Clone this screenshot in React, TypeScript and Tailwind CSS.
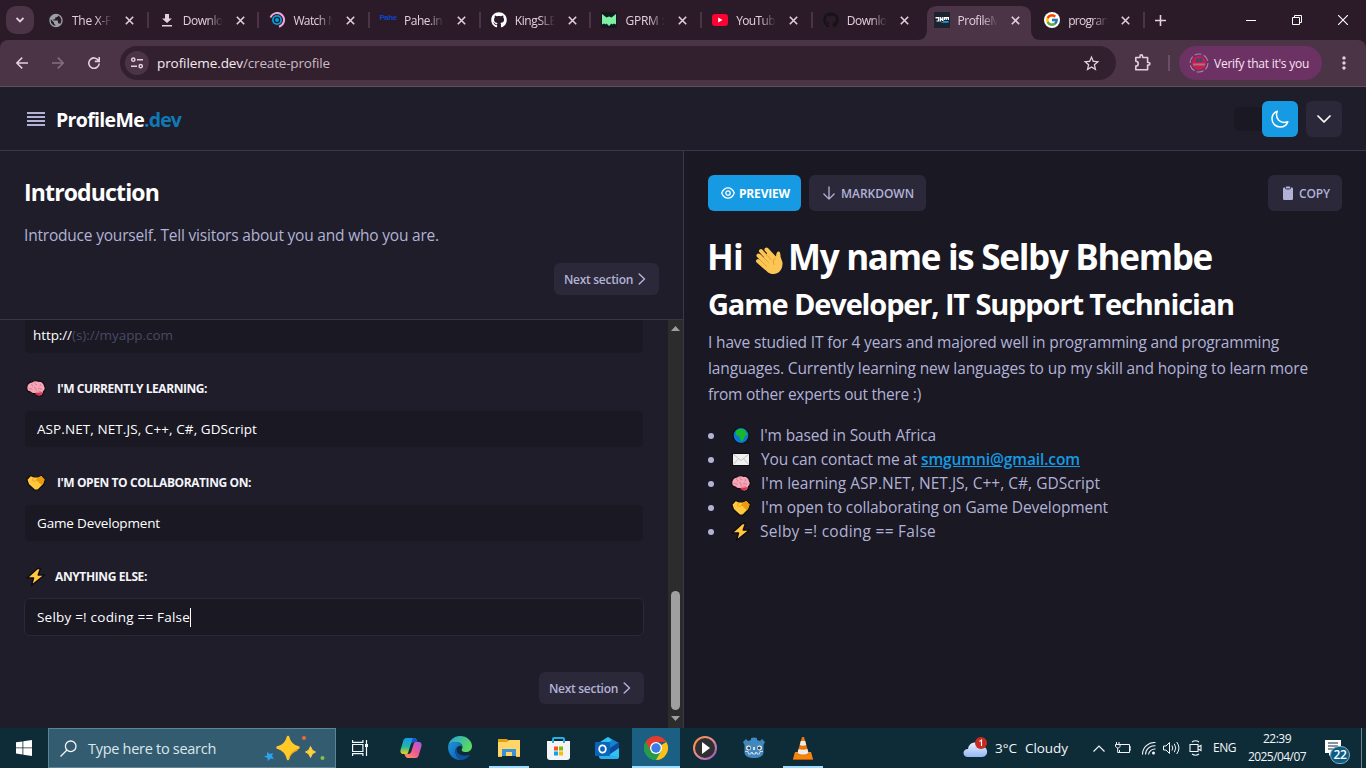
import React, { useLayoutEffect, useRef, useState } from "react";
import { FaGithub } from "react-icons/fa";
import { FcGoogle } from "react-icons/fc";
import { MdPublic, MdStarBorder, MdMoreVert } from "react-icons/md";

/* Spreads or tightens a line of text so that it takes exactly w pixels. */
function Fit({ w, className = "", children }: { w: number; className?: string; children: string }) {
  const ref = useRef<HTMLSpanElement>(null);
  const [spacing, setSpacing] = useState(0);
  useLayoutEffect(() => {
    if (ref.current) {
      const natural = ref.current.getBoundingClientRect().width;
      setSpacing((w - natural) / children.length);
    }
  }, []);
  return (
    <span ref={ref} className={`inline-block whitespace-pre ${className}`} style={{ letterSpacing: `${spacing}px` }}>
      {children}
    </span>
  );
}

function CloseX({ size = 9, className = "" }: { size?: number; className?: string }) {
  return (
    <svg width={size} height={size} viewBox="0 0 9 9" className={className} stroke="currentColor" strokeWidth="1.6" fill="none">
      <path d="M.8.8 8.2 8.2M8.2.8.8 8.2" />
    </svg>
  );
}

function ChevronRight({ className = "" }: { className?: string }) {
  return (
    <svg width="8" height="12" viewBox="0 0 8 12" fill="none" stroke="currentColor" strokeWidth="1.500" strokeLinecap="round" strokeLinejoin="round" className={className}>
      <path d="M1.200 1 6.500 6 1.200 11" />
    </svg>
  );
}

const favicons: Record<string, React.ReactNode> = {
  globe: <MdPublic size={17} className="text-[#9aa0a6]" />,
  download: (
    <svg width="16" height="16" viewBox="0 0 16 16" fill="#e3cfdd">
      <path d="M6 2h4v4.500h3L8 11 3 6.500h3zM3 13h10v1.600H3z" />
    </svg>
  ),
  watch: (
    <svg width="16" height="16" viewBox="0 0 16 16" fill="none">
      <path d="M1.500 5.500A7 7 0 1 1 10 14.700" stroke="#f3a6d8" strokeWidth="2" />
      <circle cx="8" cy="8" r="5" fill="#0b9bd8" />
      <circle cx="8" cy="8" r="2.600" stroke="#10222e" strokeWidth="1.200" />
    </svg>
  ),
  pahe: <span className="mb-1 font-['Liberation_Sans'] text-[8px] leading-3 font-bold tracking-[-0.500px] text-[#0c46c4]">Pahe</span>,
  github: <FaGithub size={16} className="text-white" />,
  gprm: (
    <svg width="16" height="16" viewBox="0 0 16 16">
      <rect width="16" height="16" fill="#141a1c" />
      <path d="M1 2l4.500 3.500L8 4.500l2.500 1L15 2v10.500l-2-1-1.500 1-1-1L8 14l-2.500-2.500-1 1-1.500-1-2 1z" fill="#7ef0a6" />
    </svg>
  ),
  youtube: (
    <svg width="16" height="16" viewBox="0 0 16 16">
      <rect y="2" width="16" height="12" rx="3" fill="#ff0033" />
      <path d="M6.200 5.500v5L10.500 8z" fill="#fff" />
    </svg>
  ),
  githubDark: <FaGithub size={16} className="text-[#171417]" />,
  profile: (
    <svg width="16" height="16" viewBox="0 0 16 16">
      <rect width="16" height="16" fill="#1b2430" />
      <path d="M1.500 5h4v4.500h-3V8.500H4V6.500H1.500zM6 5h1.200v1.500h1V5h1.300v4H8V8H7.200v1.500H6zM10 5h5v3h-1V6.500h-.8V8h-1V6.500h-.8V8H10z" fill="#fff" />
      <path d="M9 9h5.500v1.800H7.500V10H9z" fill="#159de4" />
    </svg>
  ),
  google: (
    <span className="flex size-4 items-center justify-center rounded-full bg-white">
      <FcGoogle size={14} />
    </span>
  ),
};

const tabs = [
  { icon: "globe", title: "The X-F", w: 39 },
  { icon: "download", title: "Downlo", w: 40 },
  { icon: "watch", title: "Watch N", w: 43 },
  { icon: "pahe", title: "Pahe.in", w: 38 },
  { icon: "github", title: "KingSLE", w: 41 },
  { icon: "gprm", title: "GPRM :", w: 39 },
  { icon: "youtube", title: "YouTub", w: 39 },
  { icon: "githubDark", title: "Downlo", w: 40 },
  { icon: "profile", title: "ProfileM", w: 43, active: true },
  { icon: "google", title: "progran", w: 40 },
];

function TabStrip() {
  return (
    <div className="flex h-10 bg-[#2b1a28] text-[#e3cfdd]">
      <div className="mt-1.5 ml-1.5 flex size-7 shrink-0 items-center justify-center rounded-[10px] bg-[#4b3445]">
        <svg width="8" height="6" viewBox="0 0 8 6" fill="none" stroke="currentColor" strokeWidth="1.8">
          <path d="M.5 1 4 4.500 7.500 1" />
        </svg>
      </div>
      <div className="ml-1 flex">
        {tabs.map((t, i) => (
          <div key={i} className="relative flex h-10 w-[110.7px] shrink-0 items-center pl-[10px]">
            {t.active && (
              <svg className="absolute top-1.5 -left-[7px]" width="124" height="34" viewBox="0 0 124 34" fill="#4b3445">
                <path d="M0 34q10 0 10-10V10q0-10 10-10h84q10 0 10 10v14q0 10 10 10z" />
              </svg>
            )}
            <div className="relative flex w-4 items-center justify-center">{favicons[t.icon]}</div>
            <div className="relative mt-px ml-2 w-10 text-[12px] leading-5 whitespace-nowrap [mask-image:linear-gradient(to_right,black_60%,transparent)]">
              <Fit w={t.w}>{t.title}</Fit>
            </div>
            <CloseX className="relative ml-[13px]" />
            {i !== 7 && i !== 8 && <div className="absolute top-3 right-0 h-4 w-[2px] bg-[#4b3445]" />}
          </div>
        ))}
      </div>
      <svg className="mt-[15px] ml-[10px]" width="11" height="11" viewBox="0 0 11 11" stroke="currentColor" strokeWidth="1.600">
        <path d="M5.500 0v11M0 5.500h11" />
      </svg>
      <div className="mr-[18px] ml-auto flex h-10 items-center gap-9 text-white">
        <div className="h-px w-[10px] bg-white" />
        <svg width="10" height="10" viewBox="0 0 10 10" fill="none" stroke="currentColor">
          <path d="M.5 2.500h7v7h-7zM2.500 2.500v-2h7v7h-2" />
        </svg>
        <svg width="10" height="10" viewBox="0 0 10 10" fill="none" stroke="currentColor" strokeWidth="1.100">
          <path d="M0 0l10 10M10 0 0 10" />
        </svg>
      </div>
    </div>
  );
}

function Toolbar() {
  return (
    <div className="h-[47px] bg-[#2b1a28]">
      <div className="flex h-[47px] items-start rounded-t-[8px] border-b border-[#5b5158] bg-[#4b3445] pt-1.5 text-[#e3cfdd]">
        <div className="flex h-[34px] items-center">
          <svg className="ml-4" width="12" height="12" viewBox="0 0 12 12" fill="none" stroke="currentColor" strokeWidth="1.500">
            <path d="M12 6H1M6.200.6.800 6l5.400 5.400" />
          </svg>
          <svg className="ml-6 text-[#84707f]" width="12" height="12" viewBox="0 0 12 12" fill="none" stroke="currentColor" strokeWidth="1.500">
            <path d="M0 6h11M5.800.6 11.200 6l-5.400 5.400" />
          </svg>
          <svg className="ml-[24px]" width="12" height="12" viewBox="0 0 12 12" fill="none" stroke="currentColor" strokeWidth="1.600">
            <path d="M10.500 3.500A5.200 5.200 0 1 0 11.200 6.500M11.200 0v4.400H6.800" />
          </svg>
        </div>
        <div className="ml-5 flex h-[34px] w-[996px] items-center rounded-full bg-[#33202f] pl-[5px]">
          <div className="flex size-6 items-center justify-center rounded-full bg-[#4b3445]">
            <svg width="12" height="12" viewBox="0 0 12 12" fill="none" stroke="currentColor" strokeWidth="1.500">
              <circle cx="2.300" cy="2.700" r="1.600" />
              <path d="M6 2.700h6M0 9.200h6" />
              <circle cx="9.700" cy="9.200" r="1.600" />
            </svg>
          </div>
          <div className="ml-2 text-[13.500px] leading-5">
            <Fit w={86} className="text-[#f6eaf2]">profileme.dev</Fit>
            <Fit w={87} className="text-[#c9bbc4]">/create-profile</Fit>
          </div>
          <MdStarBorder size={19} className="mr-[15px] ml-auto text-[#e3cfdd]" />
        </div>
        <div className="flex h-[34px] items-center">
          <svg className="ml-[18px]" width="18" height="18" viewBox="0 0 18 18" fill="none" stroke="currentColor" strokeWidth="1.600" strokeLinejoin="round">
            <path d="M1.800 3.500H6V2.200a1.300 1.300 0 0 1 2.600 0v1.300h5v5h1a1.300 1.300 0 0 1 0 2.600h-1v4.700H1.800v-3.700a2.400 2.400 0 0 0 0-4.800z" />
          </svg>
          <div className="ml-4 h-4 w-[2px] bg-[#685062]" />
          <div className="ml-[9px] flex h-[34px] w-[143px] items-center rounded-full bg-[#6b3263] pl-[10px] text-[12px] text-[#fbe3f5]">
            <svg width="20" height="20" viewBox="0 0 20 20" fill="none">
              <circle cx="10" cy="10" r="9" stroke="#b184ab" strokeWidth="1.100" strokeDasharray="7 2.400" />
              <circle cx="10" cy="10" r="7" fill="#c51f50" />
              <path d="M7 5.500h3V9H7zM10.500 5h3v4h-3z" fill="#3b4a75" />
              <path d="M4 10.500h12v2H4z" fill="#a9727f" />
            </svg>
            <Fit w={95} className="mt-px ml-[5px]">Verify that it's you</Fit>
          </div>
          <MdMoreVert size={20} className="ml-[12px]" />
        </div>
      </div>
    </div>
  );
}

function Emoji({ kind, size = 20 }: { kind: string; size?: number }) {
  return (
    <svg width={size} height={size} viewBox="0 0 20 20" className="shrink-0">
      {kind === "brain" && (
        <g>
          <path
            d="M.8 9.500C.3 6 2.800 2.800 6.200 2.800c1.500-1.500 4.800-1.500 6.300-.5 3-.5 5.500 1.500 5.800 4 1.500 2 1.200 5-.8 6.200-.3 3-2 4.500-4.200 4.500-2.500 0-3.300-1-4.300-2.500-2 .5-3.500 0-4.500-1.500C2 13 .8 11.500.8 9.500z"
            fill="#f5a6b7" stroke="#100c12" strokeWidth="1.200"
          />
          <path d="M9.500 14.300l7-1.300c-.5 2.500-2 3.500-3.800 3.400-1.500 0-2.500-.8-3.200-2.100z" fill="#dd3150" />
          <path d="M5 5.500c1.500 0 2 1 1.500 2M9 3.500C8.500 5 10 6 11 5.500M14 5c1 1 .500 2-.500 2.500M3 10c2-1 3 0 3.500 1M8 8.500c1.500 0 3 1.500 2 3.500M12 10c1.500-1 3 0 4 .5M10 13.500l5-1" stroke="#da718a" strokeWidth=".9" fill="none" />
        </g>
      )}
      {kind === "hands" && (
        <g>
          <path d="M.8 6.500L4.500 2.500l3 1.300h4.500l3.500-1.300 3.700 4L17.500 11.500 12 17H8.500L2.500 11.500z" fill="#ffc83d" stroke="#100c12" strokeWidth="1.200" strokeLinejoin="round" />
          <path d="M12.500 4.300l3-1.200L18.700 6.500 17 11l-1.500 1L10 6.500z" fill="#eb9b08" />
          <path d="M7.500 4.500L6.500 7.500l2 1 2.500-1.500 4.500 4" stroke="#e39d17" strokeWidth=".8" fill="none" />
        </g>
      )}
      {kind === "bolt" && (
        <path d="M11.500 1.500L1 11h6.500l-2 7.500L18.500 8h-6.300L14.500 1.500z" fill="#ffc83d" stroke="#100c12" strokeWidth="1.500" strokeLinejoin="round" />
      )}
      {kind === "globe" && (
        <g>
          <circle cx="10" cy="9.500" r="8" fill="#0b77d2" stroke="#100c12" strokeWidth="1.200" />
          <path d="M5 4.500l4-1.700 4.500.7 1.500 3 1.700 2-2.700 1.500-1 3-2 2.500-1.500-1-1-4-3.500-1.500-.5-3z" fill="#18b72c" />
        </g>
      )}
      {kind === "mail" && (
        <g>
          <rect x="1.500" y="3.500" width="17" height="12" fill="#f1f1f1" stroke="#100c12" />
          <path d="M2 4l8 6.500L18 4M2 15l5.500-6.500M18 15l-5.500-6.500" stroke="#bdbdbd" strokeWidth=".9" fill="none" />
        </g>
      )}
    </svg>
  );
}

function WavingHand() {
  return (
    <svg width="29" height="30" viewBox="0 0 29 30" fill="none" strokeLinecap="round">
      <path d="M3.500 9.500l9 9M6 5l9 10M3 15l8 7M11.500 3.500l9 9.500" stroke="#fcc654" strokeWidth="4" />
      <path d="M5 17L13 6l7 6c2-2 .5-5 3-6.500 2-.5 2.500 2 2.500 5l2 6c.5 8-4.500 12-9.700 11.500-4 0-7-3-12.800-11z" fill="#fcc654" />
      <path d="M5.500 8.500l8 8M8.500 5.500l8 8.500M4.500 13.500l7 6.500" stroke="#d99a2c" strokeWidth=".8" />
      <path d="M20.500 12c-2 2-3 4-1.500 6.500" stroke="#dd9d2d" strokeWidth="1" />
    </svg>
  );
}

function NextButton() {
  return (
    <div className="flex h-8 w-[105px] items-center rounded-[6px] bg-[#2b283a] pl-[10px] text-[12px] font-semibold text-[#b2b2d6]">
      <Fit w={69} className="mt-[2px]">Next section</Fit>
      <ChevronRight className="ml-[5px]" />
    </div>
  );
}

function Field({ icon, label, labelW, value, valueW, gap, focused }: { icon: string; label: string; labelW: number; value: string; valueW: number; gap: string; focused?: boolean }) {
  return (
    <div>
      <div className="flex h-14 items-center pt-[14px] pl-[2px] text-[12px] font-bold text-[#f4f4fa]">
        <Emoji kind={icon} />
        <Fit w={labelW} className={gap}>{label}</Fit>
      </div>
      <div className={`flex h-[38px] items-center rounded-[6px] border bg-[#191823] pl-3 text-[13.500px] text-white ${focused ? "border-[#2b283a]" : "border-[#1e1d29]"}`}>
        <Fit w={valueW}>{value}</Fit>
        {focused && <div className="h-[19px] w-px bg-white" />}
      </div>
    </div>
  );
}

function LeftPanel() {
  return (
    <div className="flex w-[684px] flex-col border-r border-[#3a364c] bg-[#1e1d29]">
      <div className="flex h-[169px] shrink-0 flex-col border-b border-[#3a364c] px-6 pt-[23px]">
        <div className="h-9 text-[23px] leading-9 font-bold text-white">
          <Fit w={135}>Introduction</Fit>
        </div>
        <div className="mt-[13px] h-6 text-[15.500px] leading-6 text-[#b2b2d6]">
          <Fit w={415}>Introduce yourself. Tell visitors about you and who you are.</Fit>
        </div>
        <div className="mt-4 self-end">
          <NextButton />
        </div>
      </div>
      <div className="flex min-h-0 flex-1">
        <div className="flex w-[668px] flex-col pr-6 pl-6">
          <div className="flex h-[34px] w-[620px] items-center rounded-b-[6px] border-x border-b border-[#1e1d29] bg-[#191823] pb-[3px] pl-2 text-[13.500px] text-white">
            <Fit w={39}>http://</Fit>
            <Fit w={101} className="text-[#4a4962]">(s)://myapp.com</Fit>
          </div>
          <div className="w-[620px]">
            <Field icon="brain" label="I'M CURRENTLY LEARNING:" labelW={150} value="ASP.NET, NET.JS, C++, C#, GDScript" valueW={220} gap="ml-[11px]" />
            <Field icon="hands" label="I'M OPEN TO COLLABORATING ON:" labelW={194} value="Game Development" valueW={123} gap="ml-[11px]" />
            <Field icon="bolt" label="ANYTHING ELSE:" labelW={92} value="Selby =! coding == False" valueW={153} gap="ml-[9px]" focused />
            <div className="mt-9 flex justify-end">
              <NextButton />
            </div>
          </div>
        </div>
        <div className="flex w-[15px] flex-col items-center bg-[#2c2c2c] pt-[6px] pb-[7px]">
          <svg width="9" height="5" viewBox="0 0 9 5" fill="#9f9f9f"><path d="M4.500 0 9 5H0z" /></svg>
          <div className="mt-auto h-[119px] w-[9px] rounded-full bg-[#9f9f9f]" />
          <svg className="mt-[6px]" width="9" height="5" viewBox="0 0 9 5" fill="#9f9f9f"><path d="M4.500 5 9 0H0z" /></svg>
        </div>
      </div>
    </div>
  );
}

const bullets = [
  { icon: "globe", text: "I'm based in South Africa", w: 176, gap: "ml-[9px]" },
  { icon: "mail", text: "You can contact me at ", w: 160, gap: "ml-[10px]", link: "smgumni@gmail.com" },
  { icon: "brain", text: "I'm learning ASP.NET, NET.JS, C++, C#, GDScript", w: 339, gap: "ml-[10px]" },
  { icon: "hands", text: "I'm open to collaborating on Game Development", w: 347, gap: "ml-[10px]" },
  { icon: "bolt", text: "Selby =! coding == False", w: 176, gap: "ml-[9px]" },
];

function RightPanel() {
  return (
    <div className="flex flex-1 flex-col bg-[#191823] px-6 pt-6 text-[#b2b2d6]">
      <div className="flex h-9 gap-2 text-[12px] font-semibold">
        <div className="flex w-[93px] items-center rounded-[6px] bg-[#159ae3] pl-[13px] text-white">
          <svg width="14" height="12" viewBox="0 0 14 12" fill="none" stroke="currentColor" strokeWidth="1.300">
            <path d="M.7 6C3.500-.8 10.500-.8 13.300 6 10.500 12.800 3.500 12.800.7 6z" />
            <circle cx="7" cy="6" r="2.200" />
          </svg>
          <Fit w={51} className="mt-[2px] ml-1 font-bold">PREVIEW</Fit>
        </div>
        <div className="flex w-[117px] items-center rounded-[6px] bg-[#2b283a] pl-[14px]">
          <svg width="12" height="14" viewBox="0 0 12 14" fill="none" stroke="currentColor" strokeWidth="1.300" strokeLinecap="round" strokeLinejoin="round">
            <path d="M6 1v12M.9 8 6 13.100 11.100 8" />
          </svg>
          <Fit w={73} className="mt-[2px] ml-[6px]">MARKDOWN</Fit>
        </div>
        <div className="ml-auto flex w-[74px] items-center rounded-[6px] bg-[#2b283a] pl-[15px]">
          <svg width="10" height="14" viewBox="0 0 10 14">
            <path d="M1.200 1.500H2q0 2 2 2h2q2 0 2-2h.8Q10 1.500 10 2.700v10Q10 14 8.700 14H1.300Q0 14 0 12.700v-10Q0 1.500 1.200 1.500zM3.500.5h3q.700 0 .7 1t-.7 1h-3q-.7 0-.7-1t.7-1z" fill="currentColor" />
          </svg>
          <Fit w={31} className="mt-[2px] ml-[6px]">COPY</Fit>
        </div>
      </div>
      <div className="mt-[22px] flex h-12 items-center text-[35px] font-bold text-white">
        <Fit w={36} className="-ml-px">Hi</Fit>
        <div className="mt-[8px] ml-[12px] w-[33px]"><WavingHand /></div>
        <Fit w={424}>My name is Selby Bhembe</Fit>
      </div>
      <div className="flex h-[46px] items-center text-[29px] font-bold text-white">
        <Fit w={526}>Game Developer, IT Support Technician</Fit>
      </div>
      <div className="mt-[2px] flex flex-col items-start text-[15.500px] leading-[26px]">
        <Fit w={571}>I have studied IT for 4 years and majored well in programming and programming</Fit>
        <Fit w={600}>languages. Currently learning new languages to up my skill and hoping to learn more</Fit>
        <Fit w={213}>from other experts out there :)</Fit>
      </div>
      <div className="mt-[17px] text-[15.500px]">
        {bullets.map((b) => (
          <div key={b.icon} className="flex h-6 items-center">
            <div className="mr-[17px] size-[6px] rounded-full bg-[#b2b2d6]" />
            <Emoji kind={b.icon} />
            <Fit w={b.w} className={b.gap}>{b.text}</Fit>
            {b.link && <Fit w={159} className="font-semibold text-[#159ae3] underline">{b.link}</Fit>}
          </div>
        ))}
      </div>
    </div>
  );
}

function SiteHeader() {
  return (
    <div className="flex h-16 shrink-0 items-center border-b border-[#3a364c] bg-[#1e1d29] pr-6 pl-[27px]">
      <svg width="18" height="14" viewBox="0 0 18 14" fill="#b2b2d6">
        <path d="M0 0h18v2H0zM0 4h18v2H0zM0 8h18v2H0zM0 12h18v2H0z" />
      </svg>
      <div className="ml-[11px] flex pt-[2px] text-[19.500px] leading-7 font-bold text-white">
        <Fit w={88}>ProfileMe</Fit>
        <Fit w={37} className="text-[#1079b5]">.dev</Fit>
      </div>
      <div className="ml-auto flex items-center">
        <div className="h-6 w-7 rounded-l-[6px] bg-[#191823]" />
        <div className="flex size-9 items-center justify-center rounded-[6px] bg-[#159ae3] text-white">
          <svg width="18" height="18" viewBox="0 0 18 18" fill="none" stroke="currentColor" strokeWidth="1.500" strokeLinejoin="round">
            <path d="M6.300 1.200C2.800 2.500 1 5.500 1 8.800c0 4.600 3.600 8.200 8.200 8.200 3.500 0 6.500-2 7.600-5.300-1.300.5-2.400.7-3.600.7-4.500 0-7.700-3.200-7.700-7.600 0-1.200.2-2.300.8-3.600z" />
          </svg>
        </div>
        <div className="ml-2 flex size-9 items-center justify-center rounded-[6px] bg-[#2b283a] text-white">
          <svg width="14" height="8" viewBox="0 0 14 8" fill="none" stroke="currentColor" strokeWidth="1.700" strokeLinecap="round" strokeLinejoin="round">
            <path d="M1 1l6 6 6-6" />
          </svg>
        </div>
      </div>
    </div>
  );
}

const apps = [
  {
    name: "copilot",
    art: (
      <svg width="24" height="24" viewBox="0 0 24 24">
        <defs>
          <linearGradient id="cp1" x1="0" y1="0" x2="0" y2="1"><stop stopColor="#1697ed" /><stop offset=".55" stopColor="#21b7a0" /><stop offset="1" stopColor="#f0d01e" /></linearGradient>
          <linearGradient id="cp2" x1="1" y1="0" x2="0" y2="1"><stop stopColor="#a658ed" /><stop offset=".5" stopColor="#ee5a8f" /><stop offset="1" stopColor="#ff9b50" /></linearGradient>
        </defs>
        <path d="M7 2h8c2 0 3 2 3.500 4H15c-2 0-3 1-3.500 3L9 17c-.5 1-1 1-3 1H4c-2 0-3-2-2.500-4L4.500 4C5 3 6 2 7 2z" fill="url(#cp1)" />
        <path d="M17 22H9c-2 0-3-2-3.500-4H9c2 0 3-1 3.500-3L15 7c.5-1 1-1 3-1h2c2 0 3 2 2.500 4l-3 10c-.5 1-1.500 2-2.500 2z" fill="url(#cp2)" />
        <path d="M15 2c2 0 3 2 3.500 4H15c-1.500 0-2.500.8-3 2l1-4c.3-1.300 1-2 2-2z" fill="#2050c5" />
      </svg>
    ),
  },
  {
    name: "edge",
    art: (
      <svg width="24" height="24" viewBox="0 0 24 24">
        <defs>
          <linearGradient id="ed1" x1="0" y1="0" x2="1" y2=".5"><stop stopColor="#259fe8" /><stop offset="1" stopColor="#5adb5f" /></linearGradient>
          <linearGradient id="ed2" x1="0" y1="0" x2="1" y2="1"><stop stopColor="#1d94df" /><stop offset="1" stopColor="#0b5eab" /></linearGradient>
        </defs>
        <path d="M0 11C1 4 6 0 12 0c7 0 12 5 12 10 0 4-3 6-6 6-4 0-5-1.500-4-3 2-4-2-7-6-7-4 0-7 2-8 5z" fill="url(#ed1)" />
        <path d="M0 11c1-3 4-5 8-5 3 0 6 2 6 5-1-1.500-2-1.500-3-1-6 2-4 11 2 14h-1C5 24 0 18 0 11z" fill="url(#ed2)" />
        <path d="M11 10c-3 2-3 6 0 8 3 2 8 2 11 .5-2 4-6 5.500-9 5.500-7-3-7-12-2-14z" fill="#0c51a0" />
      </svg>
    ),
  },
  {
    name: "explorer", running: true,
    art: (
      <svg width="22" height="20" viewBox="0 0 22 20">
        <path d="M0 1h9l2 2h11v5H0z" fill="#e3a109" />
        <path d="M0 4h9l2-2h11v16H0z" fill="#ffd667" />
        <path d="M4 18v-7h14v7h-4v-4H8v4z" fill="#3a91d7" />
        <path d="M0 18h4v1H0zM18 18h4v1h-4z" fill="#f4b83f" />
      </svg>
    ),
  },
  {
    name: "store",
    art: (
      <svg width="23" height="23" viewBox="0 0 23 23">
        <path d="M6 7V2q0-1 1-1h9q1 0 1 1v5" fill="none" stroke="#25afe8" strokeWidth="2" />
        <path d="M0 4h23v16q0 3-3 3H3q-3 0-3-3z" fill="#f4f4f4" />
        <path d="M5 4h2v2H5zM16 4h2v2h-2z" fill="#25afe8" />
        <path d="M7 9.500h4v4H7z" fill="#f35325" /><path d="M12 9.500h4v4h-4z" fill="#81bc06" /><path d="M7 14.500h4v4H7z" fill="#05a6f0" /><path d="M12 14.500h4v4h-4z" fill="#ffba08" />
      </svg>
    ),
  },
  {
    name: "outlook",
    art: (
      <svg width="25" height="22" viewBox="0 0 25 22">
        <path d="M4 6l9-6 11 6v13q0 3-3 3H7q-3 0-3-3z" fill="#1683cf" />
        <path d="M5 5l8-5 4 3-9 7zM24 9L9 19l3 3h9q3 0 3-3z" fill="#2fc3f2" />
        <path d="M15 11l9-6v6l-13 9z" fill="#10489d" />
        <path d="M4 16l20 4c-.500 1-1 2-3 2H7q-3 0-3-3z" fill="#29b0ee" />
        <rect y="5" width="15" height="14" rx="1" fill="#0965bb" />
        <ellipse cx="7.500" cy="12" rx="3.300" ry="3.700" fill="none" stroke="#fff" strokeWidth="1.800" />
      </svg>
    ),
  },
  {
    name: "chrome", current: true,
    art: (
      <svg width="24" height="24" viewBox="0 0 24 24">
        <path d="M12 12L22.400 6A12 12 0 0 1 12 24l-1-1z" fill="#fbc116" />
        <path d="M12 12l5.200 3L12 24A12 12 0 0 1 1.600 6z" fill="#269c4b" />
        <path d="M1.600 6A12 12 0 0 1 22.400 6H12l-5.200 9z" fill="#e33b2e" />
        <path d="M1.600 6L6.800 15 12 18l-1 6A12 12 0 0 1 1.600 6z" fill="#269c4b" />
        <circle cx="12" cy="12" r="6" fill="#fff" /><circle cx="12" cy="12" r="4.700" fill="#397ce7" />
      </svg>
    ),
  },
  {
    name: "media",
    art: (
      <svg width="24" height="24" viewBox="0 0 24 24">
        <defs><linearGradient id="mp" x1="0" y1="0" x2="1" y2="1"><stop stopColor="#ff8e35" /><stop offset=".5" stopColor="#e68c96" /><stop offset="1" stopColor="#9253c8" /></linearGradient></defs>
        <circle cx="12" cy="12" r="11" fill="#303033" stroke="url(#mp)" strokeWidth="2" />
        <path d="M9 6v12l8-6z" fill="#fff" />
      </svg>
    ),
  },
  {
    name: "godot",
    art: (
      <svg width="22" height="22" viewBox="0 0 22 22">
        <path d="M0 5l3-3 2 2 3-1V1l3-.5 3 .5v2l3 1 2-2 3 3-1.500 3v8c-1 4-5 5-9.500 5s-8.500-1-9.500-5V8z" fill="#4087bd" />
        <path d="M2 14.500h3l.5 2.500h2.500v-1.500h1.500V17h3v-1.500H14V17h2.500l.5-2.500h3" stroke="#e6eff5" strokeWidth=".8" fill="none" />
        <circle cx="5.500" cy="11" r="2.400" fill="#fff" /><circle cx="16.500" cy="11" r="2.400" fill="#fff" /><circle cx="5.800" cy="11" r="1.500" fill="#414042" /><circle cx="16.200" cy="11" r="1.500" fill="#414042" />
        <path d="M11 10v3" stroke="#fff" strokeWidth="1.500" />
      </svg>
    ),
  },
  {
    name: "vlc", running: true,
    art: (
      <svg width="20" height="23" viewBox="0 0 20 23">
        <path d="M2 15h16l2 7H0z" fill="#f38613" />
        <path d="M9 0h2l5 17c-2 2-10 2-12 0z" fill="#eb7607" />
        <path d="M7.800 4h4.400l1 4c-2 1-4.400 1-6.400 0zM5.600 12c3 1 6 1 8.800 0l1 4c-3 2-8 2-10.800 0z" fill="#ededed" />
        <path d="M0 22h20v1H0z" fill="#bd5905" />
      </svg>
    ),
  },
];

function Taskbar() {
  return (
    <div className="flex h-10 shrink-0 bg-[#0e2b38] text-[#f2f6f8]">
      <div className="flex w-12 items-center justify-center">
        <svg width="16" height="16" viewBox="0 0 16 16" fill="#fff">
          <path d="M0 2.300l6.500-.9v6.100H0zM7.300 1.300L16 0v7.500H7.300zM0 8.300h6.500v6.200L0 13.600zM7.300 8.300H16V16l-8.700-1.300z" />
        </svg>
      </div>
      <div className="flex w-[288px] items-center border border-[#5d8497] bg-[#345c70] pl-[11px]">
        <svg width="17" height="17" viewBox="0 0 17 17" fill="none" stroke="#f2f6f8" strokeWidth="1.300">
          <circle cx="10.700" cy="6.300" r="5.300" /><path d="M7 10L.5 16.500" />
        </svg>
        <Fit w={128} className="mt-px ml-[11px] text-[14.500px] text-[#dce7ec]">Type here to search</Fit>
        <svg className="ml-12" width="62" height="28" viewBox="0 0 62 28">
          <path d="M24 3Q26 11.500 34.500 13.500 26 16 24 25 22 16 13.500 13.500 22 11.500 24 3z" fill="#ffca28" stroke="#ffca28" strokeWidth="2.500" strokeLinejoin="round" />
          <path d="M24 26q2-9 11-11.500l-2 2.500q-6 2-8 8z" fill="#f5a514" />
          <path d="M46.500 12.500q1 4.500 5 5.500-4 1-5 5.500-1-4.500-5-5.500 4-1 5-5.500z" fill="#ffd13d" stroke="#ffd13d" strokeLinejoin="round" />
          <path d="M3 18l3 2 3-1-1 3 2 3-3.500-.5L4 27l-.500-3L0 22.500l3-1z" fill="#2ba4ed" />
          <circle cx="40" cy="4" r="2" fill="#f06a31" /><circle cx="58.500" cy="24" r="2" fill="#83c441" />
        </svg>
      </div>
      <div className="mr-[3px] flex w-12 items-center justify-center">
        <svg width="16" height="16" viewBox="0 0 16 16" fill="none" stroke="currentColor" strokeWidth="1.200">
          <path d="M.6 4.500h10.300v7H.6zM.6 0v2.300h10.300V0M.6 16v-2.300h10.300V16M14.500 0v16" />
          <path d="M13 4h3v3h-3z" fill="currentColor" stroke="none" />
        </svg>
      </div>
      {apps.map((a) => (
        <div key={a.name} className={`relative mr-px flex w-12 items-center justify-center ${a.current ? "bg-[#1b5f83]" : ""}`}>
          {a.art}
          {a.running && <div className="absolute bottom-0 left-1 h-[2px] w-10 bg-[#9bdcff]" />}
          {a.current && <div className="absolute bottom-0 left-0 h-[2px] w-12 bg-[#9bdcff]" />}
        </div>
      ))}
      <div className="ml-auto flex items-center text-[13.500px]">
        <svg width="25" height="22" viewBox="0 0 25 22">
          <defs><linearGradient id="cl" x1="0" y1="0" x2="0" y2="1"><stop stopColor="#e9f0ff" /><stop offset="1" stopColor="#94b8f5" /></linearGradient></defs>
          <path d="M5 20c-6 0-6-8 0-8 1-8 11-8 13-3 8 0 8 11 1 11z" fill="url(#cl)" />
          <circle cx="18" cy="6" r="6" fill="#c92b20" />
          <path d="M16.500 4.500l2-1.500v6" stroke="#fff" strokeWidth="1.100" fill="none" />
        </svg>
        <Fit w={22} className="ml-[7px]">3°C</Fit>
        <Fit w={43} className="ml-2">Cloudy</Fit>
        <svg className="ml-[25px]" width="12" height="7" viewBox="0 0 12 7" fill="none" stroke="currentColor" strokeWidth="1.200"><path d="M.5 6.500 6 1l5.500 5.500" /></svg>
        <svg className="ml-[10px]" width="16" height="12" viewBox="0 0 16 12" fill="none" stroke="currentColor"><path d="M5 2.500h9.500v8H4.500V8M14.500 5h1.500v3h-1.500M1.500 0v2.500M4 0v2.500M.5 2.500H5v2L3.500 6h-1L.5 4.500zM2.700 6v4.500h2" /></svg>
        <svg className="ml-[11px]" width="14" height="14" viewBox="0 0 14 14" fill="none" stroke="currentColor" strokeWidth="1.100"><path d="M.5 13.500A12 12 0 0 1 13.500 1.500M3.500 13.500A9 9 0 0 1 13.500 4.800M6.500 13.500A6.500 6.500 0 0 1 13.500 8" /><circle cx="11.500" cy="12" r="1.500" fill="currentColor" stroke="none" /></svg>
        <svg className="ml-[7px]" width="17" height="14" viewBox="0 0 17 14" fill="none" stroke="currentColor"><path d="M.5 5h2.500l3.500-3.500v11L3 9H.500zM9 4.500q1.500 2.500 0 5M11.300 2.800q3 4.200 0 8.400M13.700 1q4.500 6 0 12" /></svg>
        <svg className="ml-[9px]" width="13" height="16" viewBox="0 0 13 16" fill="none" stroke="currentColor" strokeWidth="1.100"><path d="M3 2q3.500-2.500 7 0M3 14q3.500 2.500 7 0M1 4.500h8v7H1zM9 7l3-1.500v5L9 9" /></svg>
        <Fit w={23} className="ml-[11px] text-[12px]">ENG</Fit>
        <div className="ml-[11px] flex w-[60px] flex-col items-center text-[12px] leading-[18px]">
          <Fit w={28}>22:39</Fit>
          <Fit w={58}>2025/04/07</Fit>
        </div>
        <div className="relative ml-[18px] h-10 w-9">
          <svg className="absolute top-3 left-0" width="16" height="16" viewBox="0 0 16 16">
            <path d="M0 0h16v13H7l-3 3v-3H0z" fill="#fff" /><path d="M3 3h10M3 6h10M3 9h6" stroke="#0e2b38" strokeWidth="1" />
          </svg>
          <div className="absolute top-[18px] left-[5px] flex h-[18px] w-5 items-center justify-center rounded-full border border-[#83afc3] bg-[#0d5b83] text-[12px] font-semibold tracking-[-0.3px] text-white">22</div>
        </div>
        <div className="mr-1 h-10 w-px bg-[#71838b]" />
      </div>
    </div>
  );
}

export default function App() {
  return (
    <div className="flex h-[768px] w-[1366px] flex-col overflow-hidden font-['Open_Sans','Noto_Sans',sans-serif]">
      <TabStrip />
      <Toolbar />
      <SiteHeader />
      <div className="flex min-h-0 flex-1">
        <LeftPanel />
        <RightPanel />
      </div>
      <Taskbar />
    </div>
  );
}
